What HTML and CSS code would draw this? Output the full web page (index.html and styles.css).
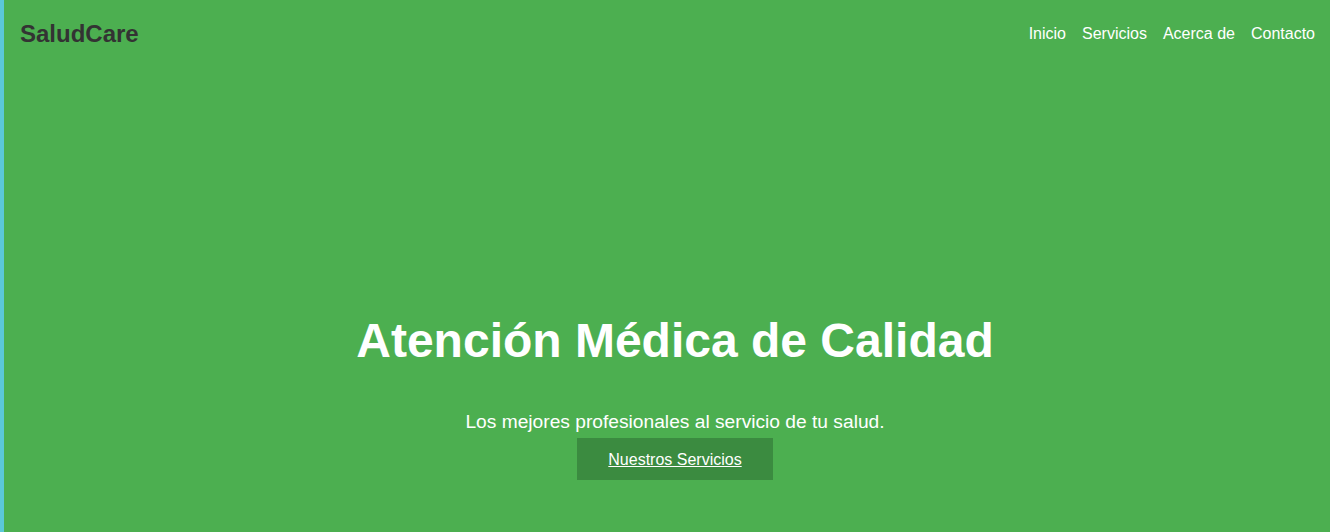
FILE: index.html
```html
<!DOCTYPE html>
<html lang="es">
<head>
<meta charset="utf-8">
<title>SaludCare</title>
<link rel="stylesheet" href="styles.css">
</head>
<body>
<div class="page">
  <header class="header">
    <div class="logo">SaludCare</div>
    <nav class="nav">
      <a href="#">Inicio</a>
      <a href="#">Servicios</a>
      <a href="#">Acerca de</a>
      <a href="#">Contacto</a>
    </nav>
  </header>
  <section class="hero">
    <h1 class="hero-title">Atención Médica de Calidad</h1>
    <p class="hero-sub">Los mejores profesionales al servicio de tu salud.</p>
    <a class="btn" href="#">Nuestros Servicios</a>
  </section>
</div>
</body>
</html>
```
FILE: styles.css
```css
html, body {
  margin: 0;
  padding: 0;
  height: 100%;
}
body {
  font-family: "Liberation Sans", Arial, sans-serif;
  background: #4caf50;
  color: #fff;
  border-left: 4px solid #5bc8d7;
  box-sizing: border-box;
  overflow: hidden;
}
.page {
  display: flex;
  flex-direction: column;
}
.header {
  height: 68px;
  display: flex;
  align-items: center;
  justify-content: space-between;
  padding: 0 15px 0 16px;
}
.logo {
  font-size: 24px;
  font-weight: bold;
  color: #333;
  margin-top: -1px;
}
.nav {
  display: flex;
  gap: 16px;
  margin-top: -1px;
}
.nav a {
  color: #fff;
  text-decoration: none;
  font-size: 16px;
}
.hero {
  display: flex;
  flex-direction: column;
  align-items: center;
  padding: 245px 0 0 16px;
}
.hero-title {
  font-size: 48px;
  font-weight: bold;
  margin: 0 0 43px;
  line-height: normal;
}
.hero-sub {
  font-size: 19.2px;
  margin: 0 0 5px;
}
.btn {
  display: inline-block;
  background: #3b8b40;
  color: #fff;
  font-size: 16px;
  padding: 13px 31px 11px;
  text-decoration: underline;
}
```
